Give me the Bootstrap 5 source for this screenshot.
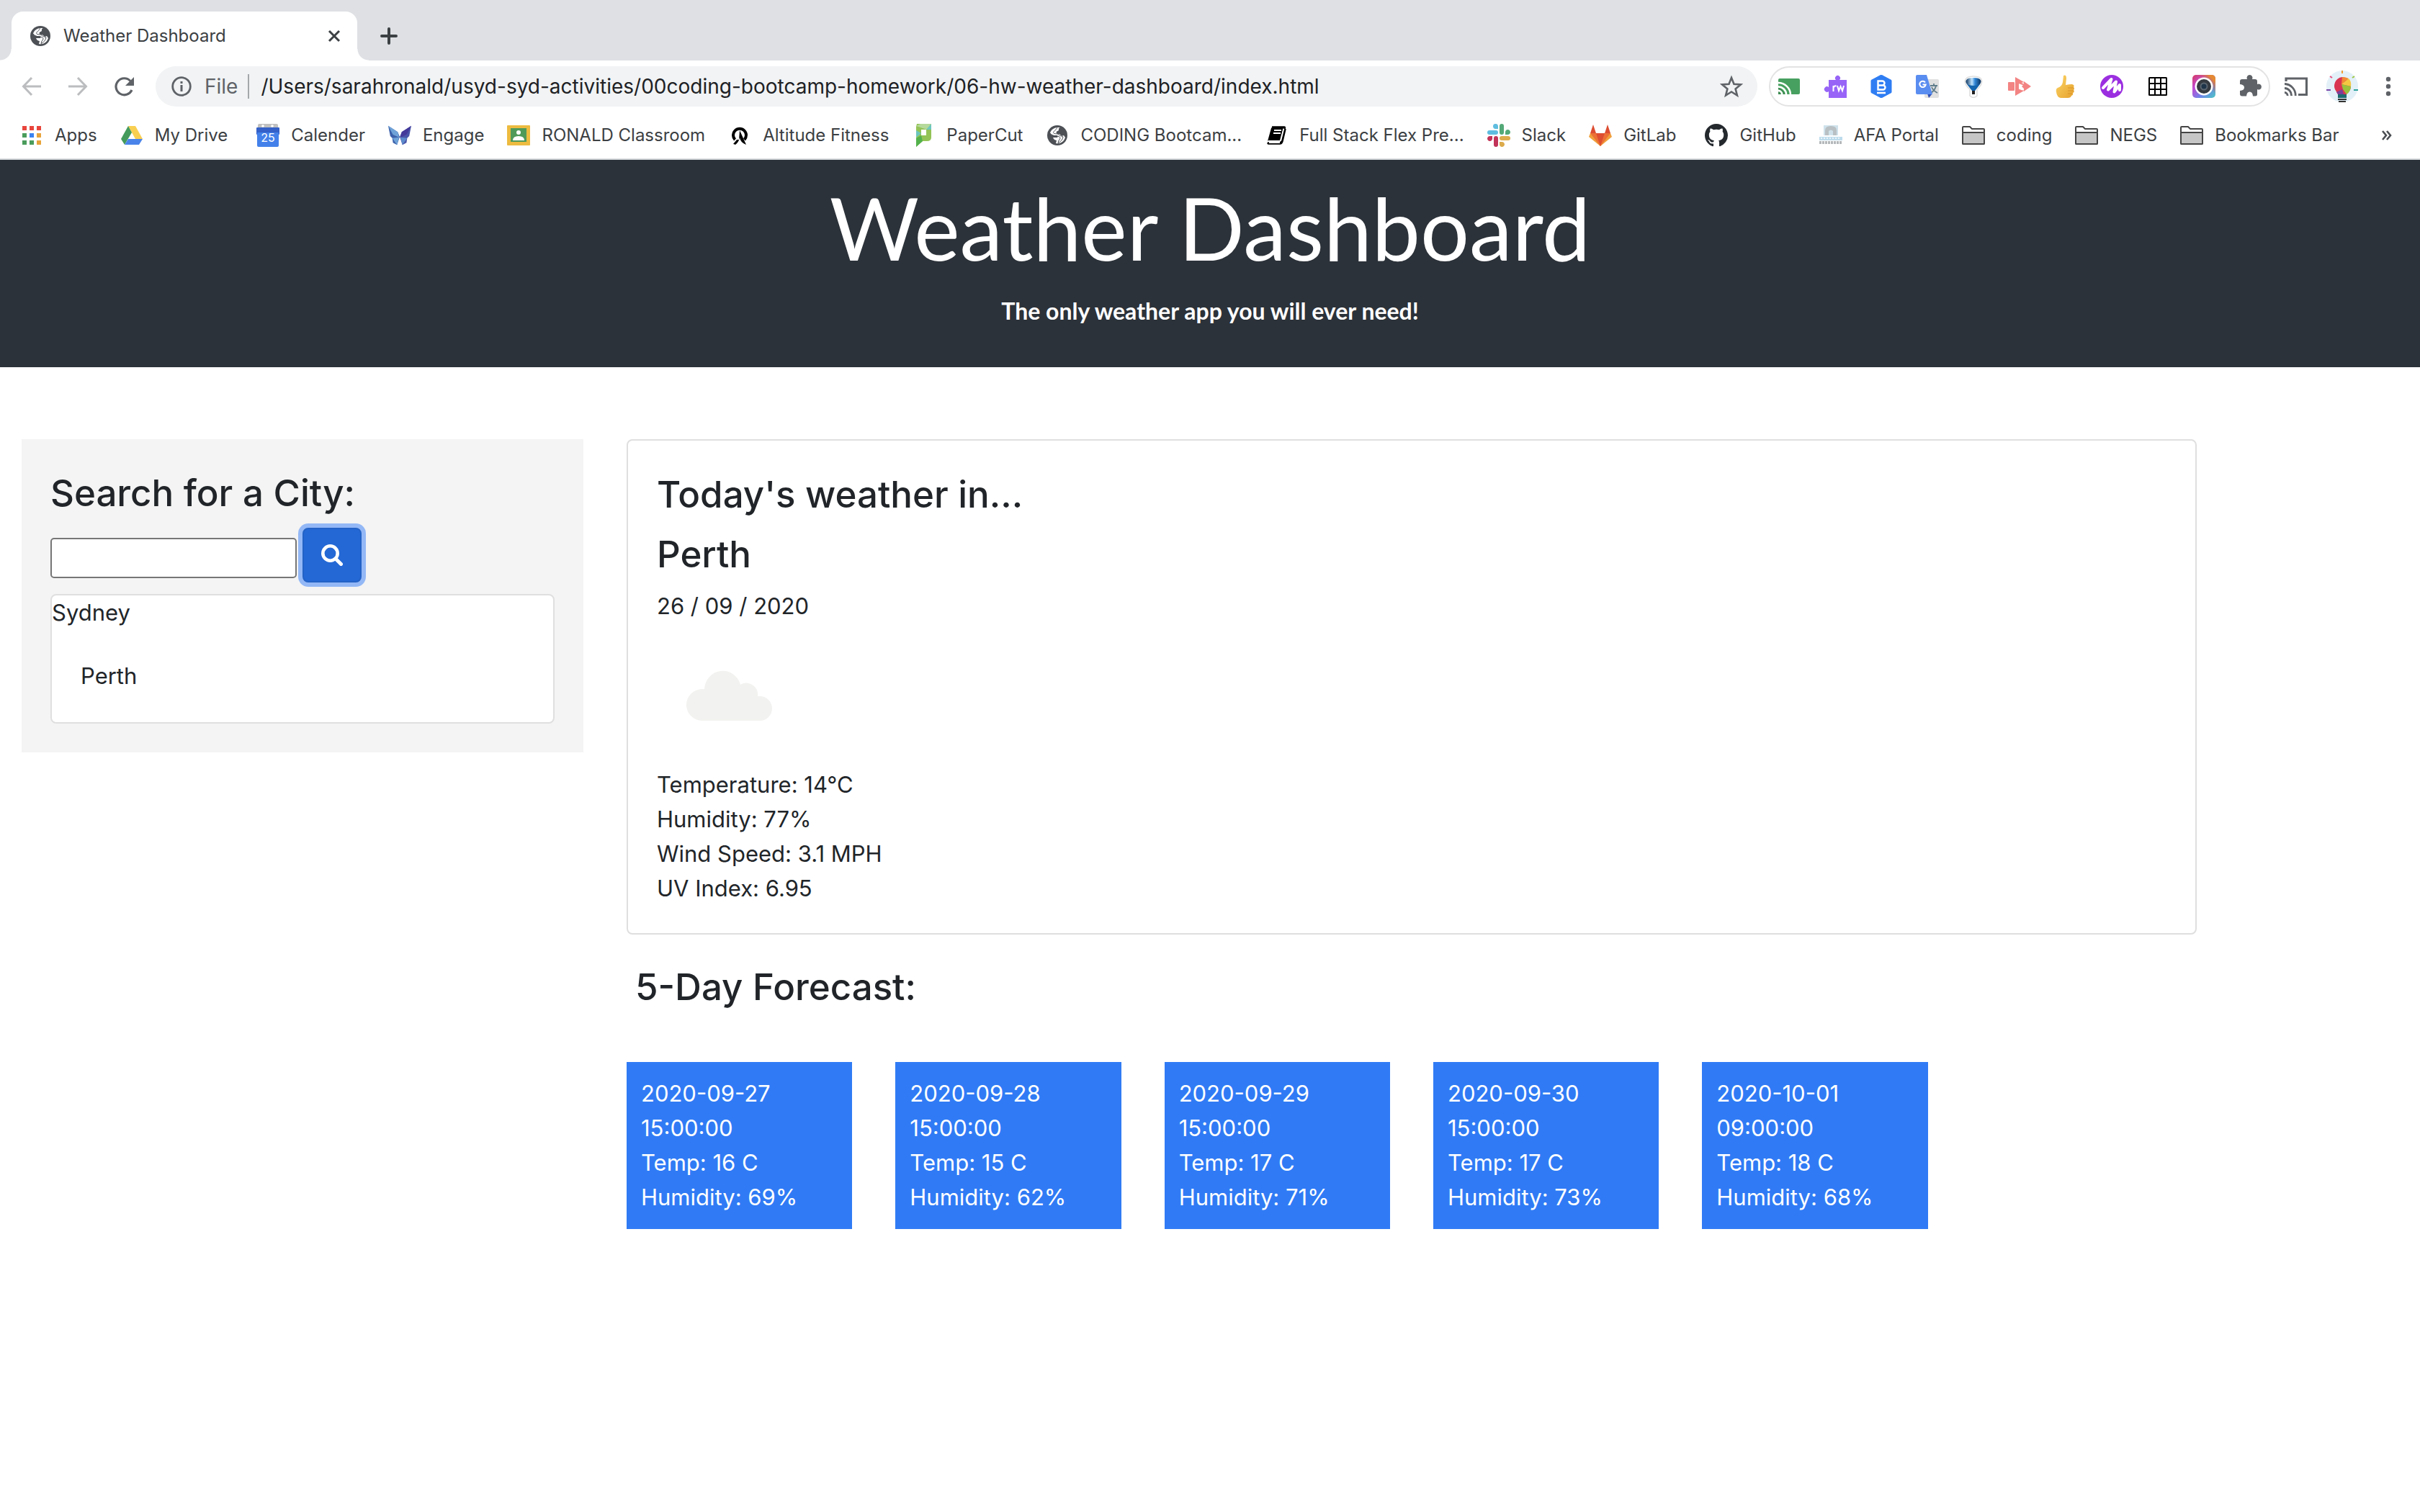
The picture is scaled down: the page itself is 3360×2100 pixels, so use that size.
<!DOCTYPE html>
<html lang="en">
<head>
<meta charset="utf-8">
<meta name="viewport" content="width=device-width, initial-scale=1">
<title>Weather Dashboard</title>
<link rel="stylesheet" href="https://cdn.jsdelivr.net/npm/bootstrap@5.3.0/dist/css/bootstrap.min.css">
<style>
  html { font-size: 32px; }
  body { font-family: Inter, "Liberation Sans", sans-serif; font-size: 31px; line-height: 48px; color: #212529; background: #fff; }
  svg { display: block; flex: none; }
  button.plain { border: 0; background: none; padding: 0; color: #5f6368; }

  /* browser window */
  .tabstrip { background: #dee0e4; height: 84px; padding: 16px 16px 0; }
  .browser-tab { position: relative; width: 480px; height: 68px; background: #fff; border-radius: 16px 16px 0 0; padding: 0 16px 0 26px; gap: 18px; font-size: 24px; color: #3c4043; }
  .browser-tab::before, .browser-tab::after { content: ""; position: absolute; bottom: 0; width: 16px; height: 16px; }
  .browser-tab::before { left: -16px; background: radial-gradient(circle at 0 0, transparent 15px, #fff 16px); }
  .browser-tab::after { right: -16px; background: radial-gradient(circle at 100% 0, transparent 15px, #fff 16px); }
  .new-tab { margin-left: 28px; }
  .toolbar { height: 72px; padding: 0 28px; }
  .nav-icons { gap: 32px; margin-right: 28px; }
  .address { height: 56px; border-radius: 28px; background: #f1f3f4; padding: 0 20px; margin-right: 16px; font-size: 28px; color: #5f6368; }
  .address input { border: 0; background: none; padding: 0; outline: 0; color: #202124; }
  .address label { margin: 0 14px 0 16px; }
  .divider { width: 2px; height: 34px; background: #a4a7aa; margin-right: 16px; }
  .extensions { height: 56px; border: 2px solid #e3e3e4; border-radius: 28px; padding: 0 10px; gap: 32px; }
  .after-ext { margin-left: 20px; gap: 26px; }
  .bookmarks { height: 66px; padding: 0 28px; gap: 32px; border-bottom: 2px solid #d5d9dc; font-size: 24px; line-height: 30px; }
  .bookmarks a { display: flex; align-items: center; gap: 16px; color: #3c4043; text-decoration: none; white-space: nowrap; }

  /* page */
  .banner { background: #2c3239; color: #fff; font-family: Lato, sans-serif; padding: 22px 0 54px; margin-bottom: 100px; }
  .banner h1 { font-size: 120px; line-height: 144px; font-weight: 400; margin-bottom: 20px; }
  .banner p { font-size: 32px; }
  .dash { --bs-gutter-x: 60px; }
  .dash h3 { font-size: 51px; line-height: 70px; font-weight: 500; margin-bottom: 13px; }
  .search-box { background: #f4f4f4; padding: 40px; }
  .search-box input { width: 342px; height: 56px; border: 2px solid #767676; border-radius: 5px; background: #fff; padding: 2px 4px; }
  .search-btn, .search-btn:hover { width: 82px; height: 76px; padding: 0; border: 2px solid #2362c6; border-radius: 8px; background: #2468d5; box-shadow: 0 0 0 6px #94b8f6; }
  .card { --bs-card-border-width: 2px; --bs-card-border-color: #dfdfdf; --bs-card-border-radius: 8px; --bs-card-inner-border-radius: 6px; --bs-card-spacer-x: 40px; --bs-card-spacer-y: 40px; --bs-card-color: #212529; }
  .today { padding-bottom: 38px; }
  .forecast-title { padding: 38px 12px 56px; }
  .day { background: #307bf5; color: #fff; padding: 20px; }
</style>
</head>
<body>
<svg width="0" height="0" class="position-absolute" aria-hidden="true">
  <defs>
    <symbol id="globe" viewBox="0 0 28 28"><circle cx="14" cy="14" r="14" fill="#4d5156"/><path d="M15 3c-5 0-10 3-11 8 1 2 3 3 5 3h4c2 0 2 2 1 3H8c1 3 4 4 5 4l-1 4c6 1 11-2 13-8l-2-3c-2 1-4 1-5-1-1-1-3-1-4-1-2-1-2-3 0-4 2 0 2-2 2-3 0-1 1-2 2-2-1 0-2 0-3 0z" fill="#fff"/><path d="M14 3.500c-2 1-1.500 3-3.500 4-2 1-2.500 3-1 4 2 .5 5 0 6.500 1.500 1 1 2 2 4 2l2 1c-.5 4-3.500 7-7 8.500l1-3.500c1.500-1 2.500-3 1.500-4.500-1.500-1.500-4-1-6-1.500-3-.5-6-2-7.500-4" fill="none" stroke="#4d5156" stroke-width="1"/></symbol>
    <symbol id="folder" viewBox="0 0 32 32"><path d="M1 5q0-1 1-1h9l3 3h16q1 0 1 1v19q0 1-1 1H2q-1 0-1-1z" fill="#fff" stroke="#454545" stroke-width="2"/><path d="M1 12h30v15q0 1-1 1H2q-1 0-1-1z" fill="#c6c6c6" stroke="#454545" stroke-width="2"/></symbol>
  </defs>
</svg>

<header>
  <div class="tabstrip d-flex align-items-center">
    <div class="browser-tab d-flex align-items-center">
      <svg width="28" height="28"><use href="#globe"/></svg>
      <span class="flex-grow-1">Weather Dashboard</span>
      <button class="plain" aria-label="Close tab"><svg width="32" height="32" viewBox="0 0 32 32"><path d="M9 9l14 14M23 9L9 23" stroke="#3c4043" stroke-width="3"/></svg></button>
    </div>
    <button class="plain new-tab" aria-label="New tab"><svg width="32" height="32" viewBox="0 0 32 32"><path d="M16 6v20M6 16h20" stroke="#3c4043" stroke-width="4" stroke-linecap="round"/></svg></button>
  </div>

  <div class="toolbar d-flex align-items-center">
    <div class="nav-icons d-flex">
      <button class="plain" aria-label="Back"><svg width="32" height="32" viewBox="0 0 32 32" fill="none" stroke="#bbbdbf" stroke-width="3"><path d="M29 16H5M16 4L4.500 16 16 28"/></svg></button>
      <button class="plain" aria-label="Forward"><svg width="32" height="32" viewBox="0 0 32 32" fill="none" stroke="#bbbdbf" stroke-width="3"><path d="M3 16h24M16 4l11.500 12L16 28"/></svg></button>
      <button class="plain" aria-label="Reload"><svg width="32" height="32" viewBox="0 0 32 32"><path d="M27 21A11.500 11.500 0 1 1 25 8.500" fill="none" stroke="#5f6368" stroke-width="3.200"/><path d="M30 3v12H18z" fill="#5f6368"/></svg></button>
    </div>
    <div class="address d-flex align-items-center flex-grow-1">
      <svg width="32" height="32" viewBox="0 0 32 32"><circle cx="16" cy="16" r="12.300" fill="none" stroke="#5f6368" stroke-width="2.800"/><path d="M16 14v9M16 9v3" stroke="#5f6368" stroke-width="3"/></svg>
      <label for="url">File</label><span class="divider"></span>
      <input id="url" class="flex-grow-1" type="text" value="/Users/sarahronald/usyd-syd-activities/00coding-bootcamp-homework/06-hw-weather-dashboard/index.html">
      <button class="plain" aria-label="Bookmark this page"><svg width="32" height="32" viewBox="0 0 32 32"><path d="M16 4l3.500 8.700 9.300.7-7.200 6 2.300 9.100L16 23.500l-7.900 5 2.300-9.100-7.200-6 9.300-.7z" fill="none" stroke="#5f6368" stroke-width="2.600"/></svg></button>
    </div>
    <div class="extensions d-flex align-items-center">
      <svg width="32" height="32" viewBox="0 0 32 32"><rect x="1" y="5" width="30" height="22" rx="2" fill="#47a05f"/><path d="M1 16v11h11z" fill="#3b8a4f"/><g fill="none" stroke="#fff" stroke-width="2.600"><path d="M0 22a5 5 0 0 1 6 6M0 16.500A11 11 0 0 1 12 28M0 11a17 17 0 0 1 18 17"/></g></svg>
      <svg width="32" height="32" viewBox="0 0 32 32"><path d="M7 7h10a3.500 3.500 0 1 1 5 0h10v25H7V23a3.800 3.800 0 1 1 0-6z" fill="#9764f7"/><path d="M13.500 23v-8M13.500 18q1-3 4-2.600M19 15l2 7 2.500-6 2.500 6 2-7" fill="none" stroke="#fff" stroke-width="2"/></svg>
      <svg width="32" height="32" viewBox="0 0 32 32"><path d="M16 0l14 7.500v17L16 32 2 24.500v-17z" fill="#2f7df3" stroke="#2f7df3" stroke-linejoin="round"/><path d="M11.500 8.500h6a3 3 0 0 1 0 6h-6zM11.500 14.500h7a3 3 0 0 1 0 6h-7zM10 25h12" fill="none" stroke="#fff" stroke-width="2.400"/></svg>
      <svg width="32" height="32" viewBox="0 0 32 32"><rect x="12" y="6" width="20" height="26" rx="2" fill="#e0e0e0"/><path d="M20 15h10M25 12v3M28 15q-1 6-7 10M22 17q2 5 8 8" fill="none" stroke="#607d8b" stroke-width="1.800"/><path d="M16 26h7l-5 6z" fill="#3050b8"/><path d="M2 0h13l8 27H2q-2 0-2-2V2q0-2 2-2z" fill="#5a8df0"/><path d="M13 10.500a4.200 4.200 0 1 0 .7 3H9.500" fill="none" stroke="#fff" stroke-width="2"/></svg>
      <svg width="32" height="32" viewBox="0 0 32 32"><defs><linearGradient id="bal"><stop offset="0" stop-color="#0d3560"/><stop offset=".4" stop-color="#bfe2fb"/><stop offset=".6" stop-color="#2f86d6"/><stop offset="1" stop-color="#0b2f59"/></linearGradient></defs><path d="M16 2C2 2 1 11 11 20v9q5 5 10 0v-9C31 11 30 2 16 2z" fill="#fff" stroke="#ddd" stroke-width="1.500"/><path d="M16 4C5 4 3 9 8 14l6 8h4l6-8c5-5 3-10-8-10z" fill="url(#bal)"/><path d="M7 13l7 9h4l7-9q-9 4-18 0z" fill="#1464ae"/><rect x="14" y="22" width="4" height="5" fill="#222"/></svg>
      <svg width="32" height="32" viewBox="0 0 32 32" fill="#f28483"><rect y="10" width="9" height="12" rx="1"/><path d="M10 3l13 7.500h-3L10 14zM10 29l13-7.500h-3L10 18z"/><path d="M10 10v-3l13 6-3 1zM10 10h5v12h-5zM22 9l10 7-10 7v-4l-3-3 3-3z"/></svg>
      <svg width="32" height="32" viewBox="0 0 32 32"><defs><linearGradient id="thumb" x2="1" y2="1"><stop stop-color="#fcd667"/><stop offset="1" stop-color="#e6a12d"/></linearGradient></defs><path d="M13 1q4-2 4 4l-1 9q5-1 9-1 4 1 2 4 2 2 0 4 2 3-1 4 1 3-2 4-1 3-5 3H9q-5-1-6-8-1-5 2-6 6-2 7-8z" fill="url(#thumb)"/><path d="M19 18h8M19 22h8M19 26h6" stroke="#d9952a"/></svg>
      <svg width="32" height="32" viewBox="0 0 32 32"><circle cx="16" cy="16" r="16" fill="#9b2fe0"/><path d="M4 18L15.500 6 11 20.500 22 9.500l-2.500 14L27 14v7" fill="none" stroke="#fff" stroke-width="4" stroke-linejoin="round" stroke-linecap="round"/></svg>
      <svg width="32" height="32" viewBox="0 0 32 32"><rect x="3" y="3" width="26" height="26" rx="1.500" fill="#000"/><path d="M5 5h6v6H5zM13 5h6v6h-6zM21 5h6v6h-6zM5 13h6v6H5zM13 13h6v6h-6zM21 13h6v6h-6zM5 21h6v6H5zM13 21h6v6h-6zM21 21h6v6h-6z" fill="#fff"/></svg>
      <svg width="32" height="32" viewBox="0 0 32 32"><defs><linearGradient id="cam" x1="0" y1="0" x2="1" y2="1"><stop stop-color="#d83a5b"/><stop offset=".3" stop-color="#c24ad0"/><stop offset=".65" stop-color="#6c86ea"/><stop offset="1" stop-color="#4cc9c0"/></linearGradient><linearGradient id="cam2" x1="0.300" y1="0.700" x2="1" y2="0"><stop offset=".4" stop-color="#d84a40" stop-opacity="0"/><stop offset=".8" stop-color="#e58a32"/></linearGradient></defs><rect width="32" height="32" rx="5" fill="url(#cam)"/><rect width="32" height="32" rx="5" fill="url(#cam2)"/><circle cx="16" cy="16" r="12.500" fill="#fff"/><circle cx="16" cy="16" r="10" fill="#343a40"/><circle cx="16" cy="16" r="5.500" fill="#5a6570"/><circle cx="16" cy="16" r="3.500" fill="#1e3448"/></svg>
      <svg width="32" height="32" viewBox="0 0 32 32"><path d="M5 6h7a4 4 0 1 1 7 0h4q3 0 3 3v4a4 4 0 1 1 0 7v7q0 2.500-3 2.500h-3q-.5-6-4.500-6t-4.500 6H5q-3 0-3-3v-4.500q6-.5 6-4.500t-6-4.500V9q0-3 3-3z" fill="#5f6368"/></svg>
    </div>
    <div class="after-ext d-flex align-items-center">
      <svg width="32" height="32" viewBox="0 0 32 32" fill="none" stroke="#5f6368" stroke-width="3.200"><path d="M2 9V5h28.500v22.500H19"/><path d="M0 24.500a4 4 0 0 1 4 4.500M0 18.500A10 10 0 0 1 9.500 29M0 12.500A16 16 0 0 1 15.200 29" stroke-width="2.800"/></svg>
      <svg width="44" height="44" viewBox="0 0 44 44"><circle cx="22" cy="22" r="22" fill="#e3f0f8"/><path d="M22 9a12.500 12.500 0 0 1 8.500 21L28 33H16l-2-3.500A12.500 12.500 0 0 1 22 9z" fill="#d93551"/><path d="M22 9l-1 10 10-8q-4-2-9-2z" fill="#f28a35"/><path d="M31 11L21 19l13 3q1-7-3-11z" fill="#f5c842"/><path d="M21 19l13 3q0 7-6 11l-5-7z" fill="#9cc23c"/><path d="M14 30l8-4 2 7h-8z" fill="#7b3f98"/><path d="M16 33h12v5H16z" fill="#1d6b70"/><path d="M16 40h12M17 43h10" stroke="#333" stroke-width="2"/><path d="M22 0v4" stroke="#f2a032" stroke-width="2"/><path d="M5 8l3 2" stroke="#e94f7c" stroke-width="2"/><path d="M39 8l-3 2" stroke="#a0c840" stroke-width="2"/><path d="M0 27h6" stroke="#7a48a8" stroke-width="2"/><path d="M38 27h6" stroke="#2aa39a" stroke-width="2"/></svg>
      <button class="plain" aria-label="Menu"><svg width="32" height="32" viewBox="0 0 32 32" fill="#5f6368"><circle cx="16" cy="6" r="3.200"/><circle cx="16" cy="16" r="3.200"/><circle cx="16" cy="26" r="3.200"/></svg></button>
    </div>
  </div>

  <nav class="bookmarks d-flex align-items-center" aria-label="Bookmarks">
    <a href="#"><svg width="32" height="32" viewBox="0 0 32 32"><path d="M3 3h6v6H3zM13 3h6v6h-6zM23 3h6v6h-6z" fill="#e8453c"/><path d="M3 13h6v6H3zM3 23h6v6H3zM13 23h6v6h-6z" fill="#4a9c5b"/><path d="M13 13h6v6h-6z" fill="#3b82f0"/><path d="M23 13h6v6h-6zM23 23h6v6h-6z" fill="#e8a33a"/></svg>Apps</a>
    <a href="#" class="me-1"><svg width="32" height="32" viewBox="0 0 32 32"><path d="M11 3h10l10 18H21z" fill="#f9cf52"/><path d="M11 3l5 9L6 29 1 21z" fill="#449b5c"/><path d="M11 21h20l-5 8H6z" fill="#4a84ea"/></svg>My Drive</a>
    <a href="#"><svg width="32" height="32" viewBox="0 0 32 32"><rect x="2" width="28" height="8" rx="2" fill="#c0c0c0"/><circle cx="9" cy="3" r="1.800" fill="#fff"/><circle cx="22" cy="3" r="1.800" fill="#fff"/><rect y="5" width="32" height="10" rx="1" fill="#3460c8"/><path d="M1 12h30v18q0 2-2 2H3q-2 0-2-2z" fill="#4380ea"/><text x="16" y="25" text-anchor="middle" font-family="Inter, sans-serif" font-size="16" fill="#fff">25</text></svg>Calender</a>
    <a href="#"><svg width="32" height="32" viewBox="0 0 34 32"><path d="M0 2l14 9 3 7-4 12-6-3-1-7-3-3z" fill="#3d62ab"/><path d="M34 2l-14 9-3 7 4 12 6-3 1-7 3-3z" fill="#4a55a8"/><path d="M0 2l14 9 2 8-9-4zM6 20l10-1-3 11z" fill="#6fa3d8"/><path d="M34 2l-14 9-2 8 9-4z" fill="#45399a"/><path d="M28 20l-10-1 3 11z" fill="#5d8bcb"/><path d="M12 0h10l-5 17z" fill="#fff"/></svg>Engage</a>
    <a href="#"><svg width="32" height="32" viewBox="0 0 32 32"><rect y="2" width="32" height="28" rx="1" fill="#edbb40"/><rect x="5" y="6" width="22" height="19" fill="#4f9a59"/><circle cx="16" cy="12" r="3" fill="#fff"/><path d="M8 23q0-6 8-6t8 6z" fill="#fff"/></svg>RONALD Classroom</a>
    <a href="#"><svg width="32" height="32" viewBox="0 0 32 32"><path d="M9.500 22a9 9 0 1 1 13 0" fill="none" stroke="#000" stroke-width="4"/><path d="M16 9l9 20q-8-3-9-10-1 6-6 10-2-1-3-1l5-6h3z" fill="#000"/></svg>Altitude Fitness</a>
    <a href="#"><svg width="32" height="32" viewBox="0 0 32 32"><path d="M7 0h20v19q0 5-6 5h-6l-9 8V4z" fill="#93c356"/><path d="M6 3l6-3h15l-6 8z" fill="#b5d99a"/><path d="M6 9l7 4-7 6zM27 0l-7 8h7z" fill="#6cc6bd"/><path d="M6 20l7-4 2 8-9 8z" fill="#53b14c"/><path d="M13 8h7v8h-7z" fill="#fff"/></svg>PaperCut</a>
    <a href="#"><svg width="32" height="32" viewBox="-2 -2 32 32"><use href="#globe" width="28" height="28"/></svg>CODING Bootcam...</a>
    <a href="#"><svg width="32" height="32" viewBox="0 0 32 32"><path d="M10 4h17q2 0 1 3l-4 16q-1 3-4 3H5q-2 1 0 2h16q3 0 4-4l4-17" fill="#000" stroke="#000" stroke-width="1.500"/><path d="M4 24L9 6q1-2 3-2h14l-5 19H5z" fill="#000"/><path d="M13 9h10M12 13h10M6 26h15" stroke="#fff" stroke-width="1.800"/></svg>Full Stack Flex Pre...</a>
    <a href="#"><svg width="32" height="32" viewBox="0 0 32 32"><g fill="#5fbde0"><rect y="9" width="15" height="6" rx="3"/><path d="M15 7h-3a3.500 3.500 0 1 1 3-4z"/></g><g fill="#53a977"><rect x="17" width="6" height="15" rx="3"/><path d="M25 15v-3a3.500 3.500 0 1 1 3 3z"/></g><g fill="#dcab4b"><rect x="17" y="17" width="15" height="6" rx="3"/><path d="M17 25h3a3.500 3.500 0 1 1-3 3z"/></g><g fill="#c23459"><rect x="9" y="17" width="6" height="15" rx="3"/><path d="M7 17v3a3.500 3.500 0 1 1-3-3z"/></g></svg>Slack</a>
    <a href="#" class="me-1"><svg width="32" height="32" viewBox="0 0 32 32"><path d="M16 31L0 18l2-5h28l2 5z" fill="#f0a03c"/><path d="M16 31L2 13h28z" fill="#ec7035"/><path d="M16 31L10 13h12zM2 13L6 1l4 12zM30 13L26 1l-4 12z" fill="#dc4d31"/></svg>GitLab</a>
    <a href="#"><svg width="32" height="32" viewBox="0 0 16 16"><path fill="#24292e" d="M8 0C3.580 0 0 3.580 0 8c0 3.540 2.290 6.530 5.470 7.590.4.070.55-.17.55-.38 0-.19-.01-.82-.01-1.490-2.010.37-2.530-.49-2.690-.94-.09-.23-.48-.94-.82-1.130-.28-.15-.68-.52-.01-.53.63-.01 1.080.58 1.230.82.720 1.210 1.870.870 2.330.660.070-.52.280-.87.510-1.070-1.780-.2-3.640-.89-3.640-3.950 0-.87.310-1.590.820-2.150-.08-.2-.36-1.020.080-2.120 0 0 .67-.21 2.200.820.640-.18 1.320-.27 2-.27s1.360.090 2 .27c1.530-1.040 2.200-.82 2.200-.82.440 1.100.160 1.920.080 2.120.510.560.820 1.270.820 2.150 0 3.070-1.870 3.750-3.650 3.950.290.250.540.730.540 1.480 0 1.070-.01 1.930-.01 2.200 0 .21.150.460.550.380A8.010 8.010 0 0 0 16 8c0-4.420-3.580-8-8-8z"/></svg>GitHub</a>
    <a href="#"><svg width="32" height="32" viewBox="0 0 32 32"><path d="M6 2h20v14H6z" fill="#cfe2ec"/><path d="M8 16V9q0-6 8-6t8 6v7h-5v-6q-3-3-6 0v6z" fill="#b9c0c4"/><path d="M0 18h32v5H0z" fill="#bddcec"/><path d="M0 26h32" stroke="#b4b8ba" stroke-width="4" stroke-dasharray="3 1"/><path d="M2 20h28" stroke="#e8f3f9" stroke-width="2" stroke-dasharray="2 2"/></svg>AFA Portal</a>
    <a href="#"><svg width="32" height="32"><use href="#folder"/></svg>coding</a>
    <a href="#"><svg width="32" height="32"><use href="#folder"/></svg>NEGS</a>
    <a href="#"><svg width="32" height="32"><use href="#folder"/></svg>Bookmarks Bar</a>
    <button class="plain ms-auto" aria-label="More bookmarks"><svg width="32" height="32" viewBox="0 0 32 32" fill="none" stroke="#4a4d51" stroke-width="2.600"><path d="M8 10l5 6-5 6M14 10l5 6-5 6"/></svg></button>
  </nav>
</header>

<section class="banner text-center">
  <h1>Weather Dashboard</h1>
  <p class="fw-bold mb-0">The only weather app you will ever need!</p>
</section>

<main class="container-fluid p-0">
  <div class="row dash mx-0">
    <div class="col-3">
      <div class="search-box">
        <h3><label for="city">Search for a City:</label></h3>
        <form class="d-flex align-items-center">
          <input id="city" type="text" class="mt-1 me-1">
          <button type="button" class="btn btn-primary search-btn d-flex align-items-center justify-content-center" aria-label="Search">
            <svg width="30" height="30" viewBox="0 0 30 30" fill="none" stroke="#fff"><circle cx="12.500" cy="12.500" r="10.200" stroke-width="4.600"/><path d="M20 20l7.500 7.500" stroke-width="5" stroke-linecap="round"/></svg>
          </button>
        </form>
        <div class="card mt-2">
          <div>Sydney</div>
          <div class="card-body">Perth</div>
        </div>
      </div>
    </div>

    <div class="col-8">
      <div class="card">
        <div class="card-body today">
          <h3>Today's weather in...</h3>
          <h3>Perth</h3>
          <div>26 / 09 / 2020</div>
          <svg width="200" height="200" viewBox="0 0 200 200" fill="#f2f2f0"><path d="M63 135a22 22 0 0 1 0-44h3a25.500 26.500 0 0 1 50-6 16 16 0 0 1 24 16h3a17 17 0 0 1 0 34z"/></svg>
          <div>Temperature: 14°C</div>
          <div>Humidity: 77%</div>
          <div>Wind Speed: 3.1 MPH</div>
          <div>UV Index: 6.95</div>
        </div>
      </div>
      <div class="forecast-title"><h3>5-Day Forecast:</h3></div>
      <div class="row dash">
        <div class="col-2"><div class="day">2020-09-27 15:00:00<br>Temp: 16 C<br>Humidity: 69%</div></div>
        <div class="col-2"><div class="day">2020-09-28 15:00:00<br>Temp: 15 C<br>Humidity: 62%</div></div>
        <div class="col-2"><div class="day">2020-09-29 15:00:00<br>Temp: 17 C<br>Humidity: 71%</div></div>
        <div class="col-2"><div class="day">2020-09-30 15:00:00<br>Temp: 17 C<br>Humidity: 73%</div></div>
        <div class="col-2"><div class="day">2020-10-01 09:00:00<br>Temp: 18 C<br>Humidity: 68%</div></div>
      </div>
    </div>
  </div>
</main>
<script src="https://cdn.jsdelivr.net/npm/bootstrap@5.3.0/dist/js/bootstrap.bundle.min.js"></script>
</body>
</html>
